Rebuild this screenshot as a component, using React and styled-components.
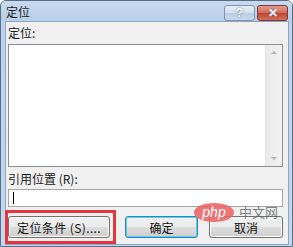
import React from "react";
import styled, { createGlobalStyle } from "styled-components";

const Global = createGlobalStyle`
  html, body { margin: 0; padding: 0; background: #ffffff; }
  body { font-family: "Noto Sans CJK SC", "Liberation Sans", sans-serif; }
`;

const Win = styled.div`
  position: relative;
  box-sizing: border-box;
  width: 293px;
  height: 247px;
  border: 1px solid #5b6d84;
  border-radius: 6px 6px 0 0;
  background: linear-gradient(#c3d7ee, #bcd3ee 30px, #c2d8f0);
  display: flex;
  flex-direction: column;
  overflow: hidden;
`;

const TitleBar = styled.div`
  height: 23px;
  display: flex;
  align-items: center;
  padding: 0 4px 0 5px;
  background: linear-gradient(#c8daef, #b8cfe9);
`;

const Title = styled.div`
  flex: 1;
  font-size: 12px;
  color: #1b1b1b;
  line-height: 1;
  margin-top: 1px;
`;

const CapBtn = styled.div`
  box-sizing: border-box;
  width: ${p => p.$w}px;
  height: 16px;
  margin-left: ${p => p.$ml || 0}px;
  border: 1px solid ${p => (p.$close ? "#7b3a36" : "#7d93b2")};
  border-radius: 3px;
  background: ${p =>
    p.$close
      ? "linear-gradient(#e59d8f, #d1695a 50%, #c04430 51%, #d4705c)"
      : "linear-gradient(#e8f0f8, #d0deef 50%, #b9cce4 51%, #c9daee)"};
  display: flex;
  align-items: center;
  justify-content: center;
  color: #fff;
  font-family: "Liberation Sans", sans-serif;
  font-weight: bold;
  font-size: 12px;
  text-shadow: 0 0 2px #4a5d79;
  align-self: flex-start;
  margin-top: 4px;
`;

const Body = styled.div`
  flex: 1;
  margin: 0 3px 3px 4px;
  border: 1px solid #90a6c0;
  background: #f0f0f0;
  padding: 3px 5px 0 2px;
  display: flex;
  flex-direction: column;
`;

const Label = styled.div`
  font-size: 12px;
  line-height: 16px;
  color: #1a1a1a;
  margin-top: ${p => p.$mt || 0}px;
`;

const ListBox = styled.div`
  box-sizing: border-box;
  height: 123px;
  border: 1px solid #8e8f8f;
  background: #fff;
  display: flex;
  justify-content: flex-end;
  margin-top: 3px;
`;

const ScrollBar = styled.div`
  width: 17px;
  background: linear-gradient(90deg, #eaeaea, #f2f2f2);
  border-left: 1px solid #e2e2e2;
  display: flex;
  flex-direction: column;
  justify-content: space-between;
  align-items: center;
  padding: 6px 0;
  box-sizing: border-box;
`;

const Arrow = styled.div`
  width: 0;
  height: 0;
  border-left: 3px solid transparent;
  border-right: 3px solid transparent;
  ${p => (p.$down ? "border-top: 3px solid #b5b5b5;" : "border-bottom: 3px solid #b5b5b5;")}
`;

const Input = styled.div`
  box-sizing: border-box;
  height: 18px;
  border: 1px solid #a6a6a6;
  background: #fff;
  display: flex;
  align-items: center;
  padding-left: 4px;
  margin-top: 2px;
`;

const Caret = styled.div`
  width: 1px;
  height: 12px;
  background: #000;
`;

const ButtonRow = styled.div`
  display: flex;
  align-items: center;
  margin-top: 3px;
`;

const Highlight = styled.div`
  margin-left: -3px;
  padding: 3px 3px 3px 0;
  border: 3px solid #e4363c;
  display: flex;
`;

const Button = styled.div`
  box-sizing: border-box;
  width: ${p => p.$w}px;
  height: 22px;
  margin-left: ${p => p.$ml || 0}px;
  border: 1px solid ${p => (p.$def ? "#3c7fb1" : "#707070")};
  border-radius: 3px;
  background: linear-gradient(#f2f2f2, #ebebeb 50%, #dddddd 51%, #cfcfcf);
  box-shadow: ${p => (p.$def ? "inset 0 0 0 1px #48d7fb" : "inset 0 0 0 1px #fcfcfc")};
  display: flex;
  align-items: center;
  justify-content: ${p => (p.$left ? "flex-start" : "center")};
  padding-left: ${p => (p.$left ? 8 : 0)}px;
  font-size: 12px;
  letter-spacing: ${p => (p.$left ? 0.4 : 0)}px;
  color: #111;
`;

const Watermark = styled.div`
  position: absolute;
  left: 193px;
  top: 202px;
  display: flex;
  align-items: center;
  pointer-events: none;
`;

const PhpOval = styled.div`
  width: 40px;
  height: 19px;
  border-radius: 50%;
  background: rgba(236, 95, 95, 0.85);
  color: #fff;
  font-family: "Liberation Sans", sans-serif;
  font-style: italic;
  font-size: 14px;
  line-height: 19px;
  text-align: center;
`;

const Cn = styled.div`
  margin-left: 5px;
  margin-top: -3px;
  font-size: 13px;
  line-height: 13px;
  color: rgba(90, 90, 90, 0.75);
`;

export default function App() {
  return (
    <>
      <Global />
      <Win>
        <TitleBar>
          <Title>定位</Title>
          <CapBtn $w={31}>?</CapBtn>
          <CapBtn $w={31} $ml={2} $close>✕</CapBtn>
        </TitleBar>
        <Body>
          <Label>定位:</Label>
          <ListBox>
            <ScrollBar>
              <Arrow />
              <Arrow $down />
            </ScrollBar>
          </ListBox>
          <Label $mt={4}>引用位置 (R):</Label>
          <Input>
            <Caret />
          </Input>
          <ButtonRow>
            <Highlight>
              <Button $w={102} $left>定位条件 (S)....</Button>
            </Highlight>
            <Button $w={73} $ml={9} $def>确定</Button>
            <Button $w={74} $ml={11}>取消</Button>
          </ButtonRow>
        </Body>
        <Watermark>
          <PhpOval>php</PhpOval>
          <Cn>中文网</Cn>
        </Watermark>
      </Win>
    </>
  );
}
